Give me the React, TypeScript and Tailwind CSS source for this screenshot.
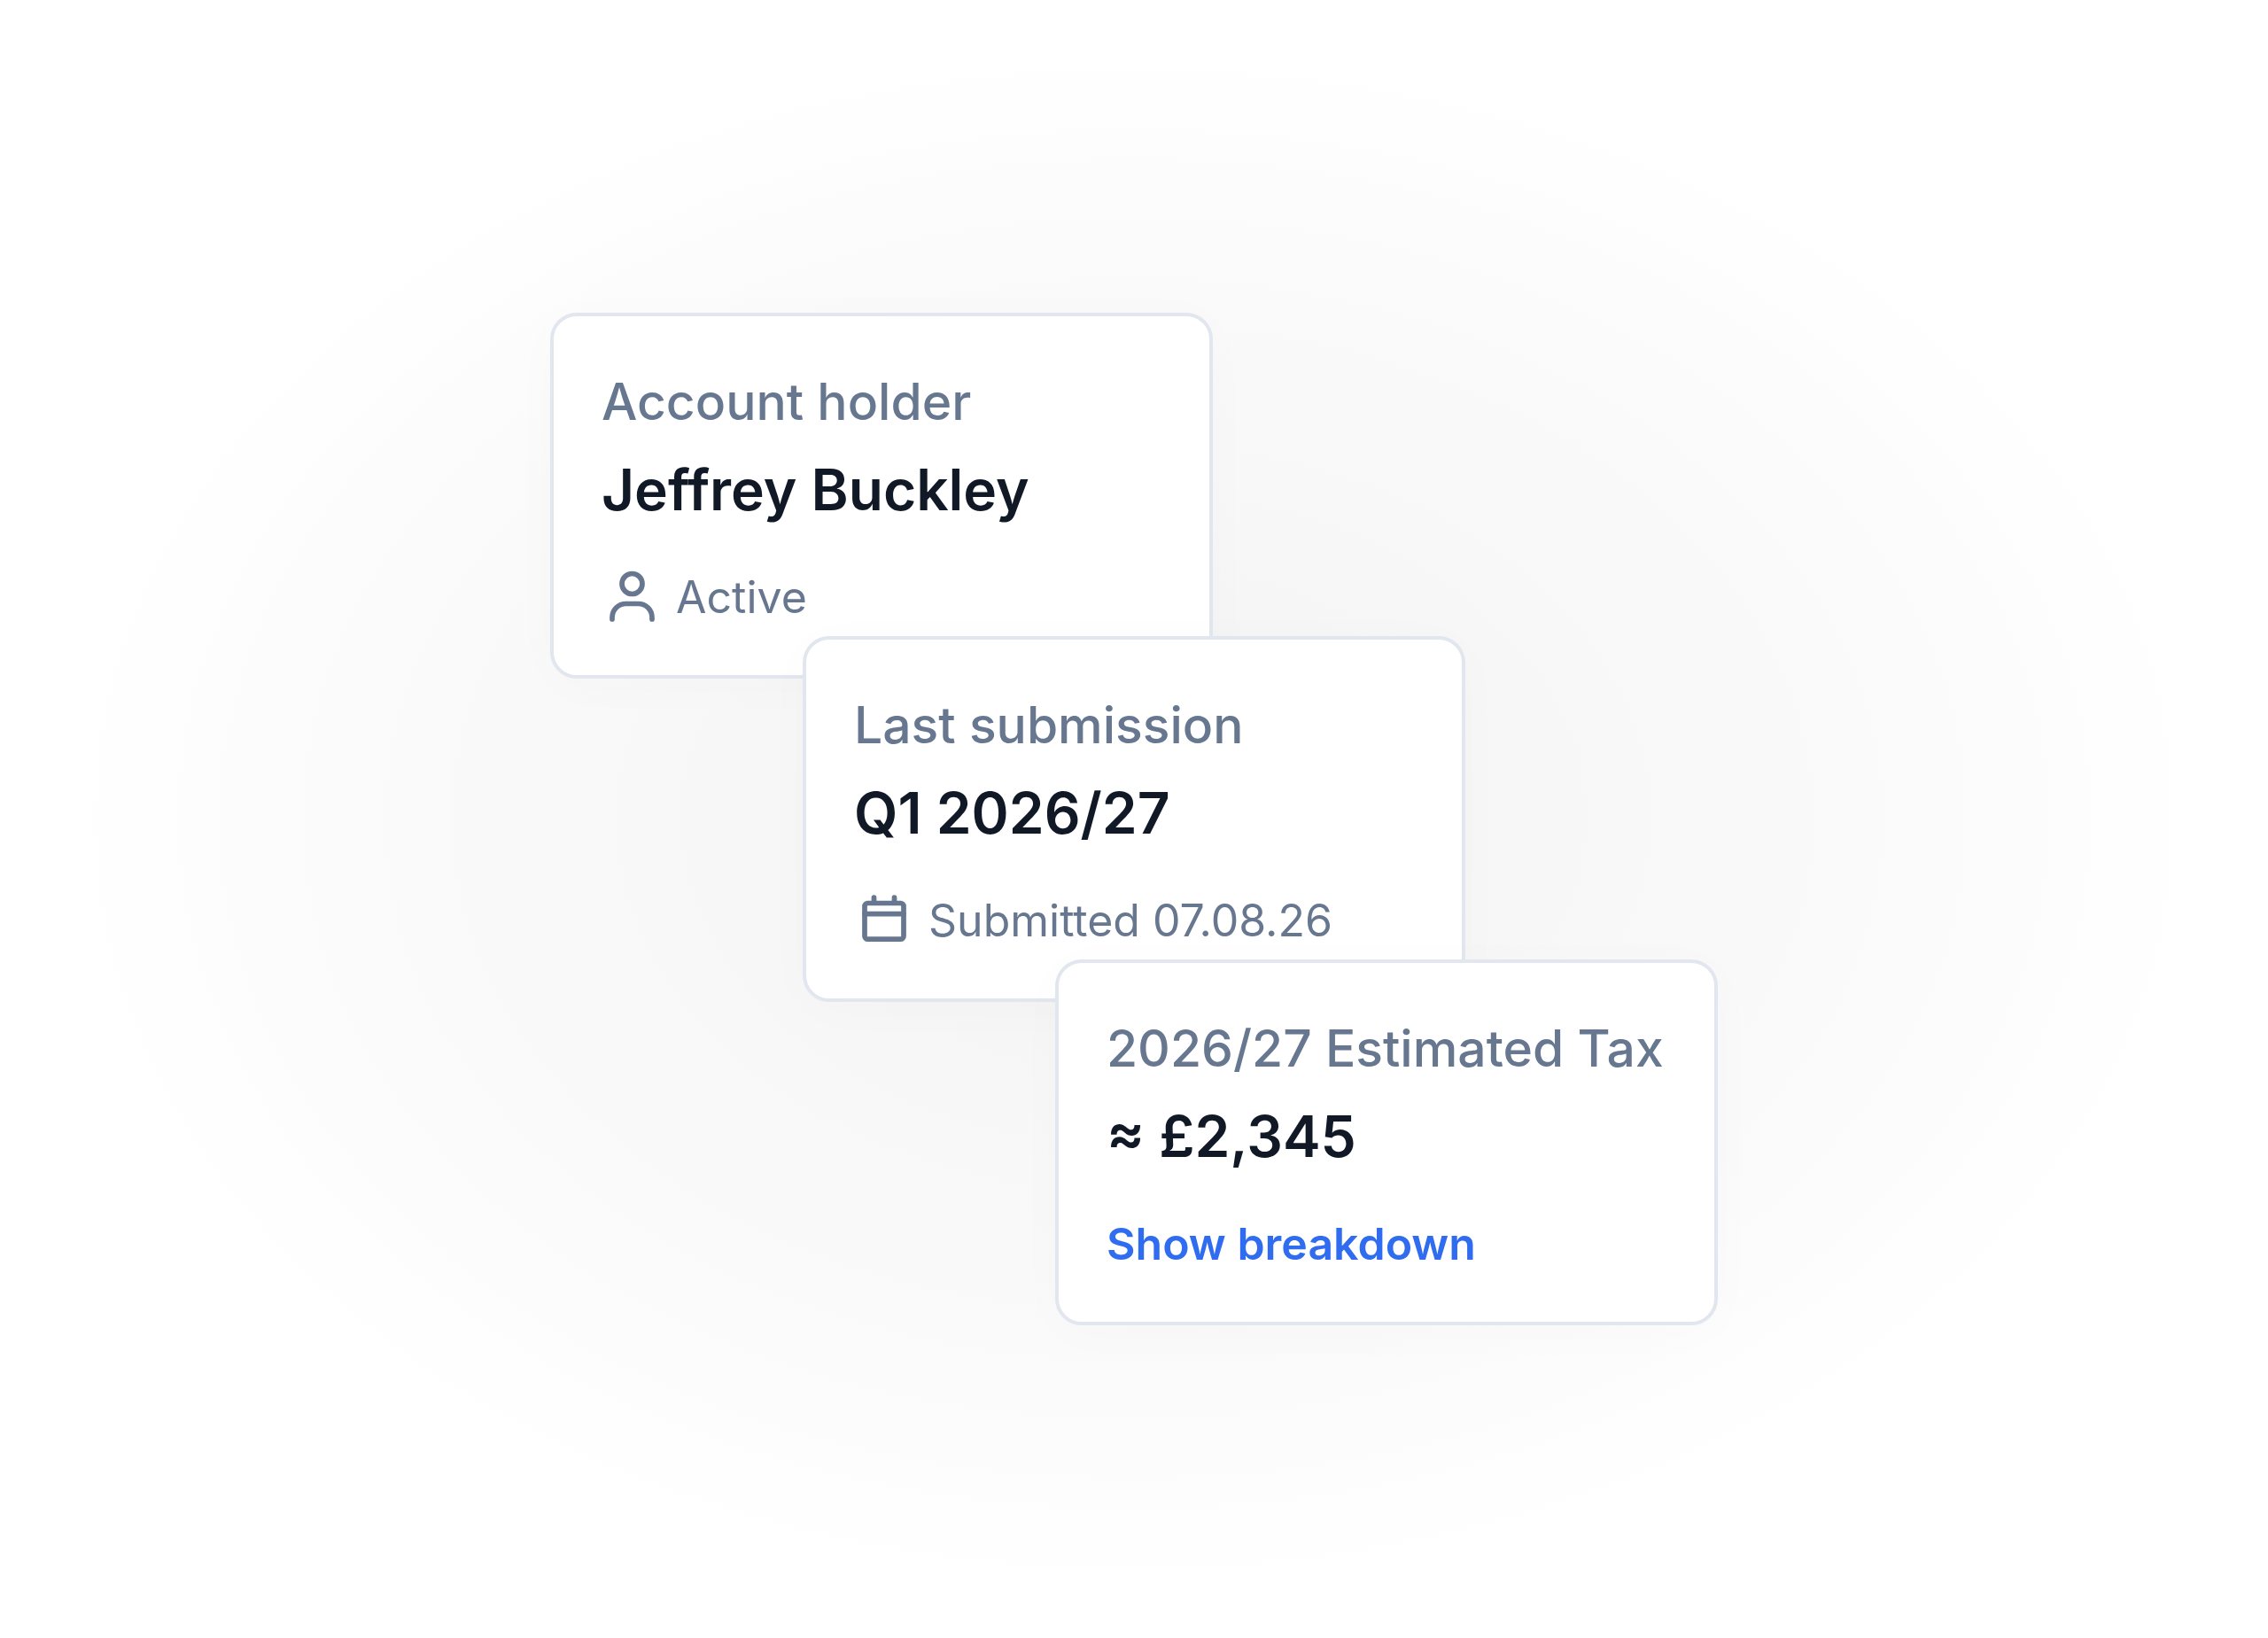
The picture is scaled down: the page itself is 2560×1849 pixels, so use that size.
import type { ReactNode } from 'react';

interface CardProps {
  label: string;
  value: string;
  children: ReactNode;
  className?: string;
}

function Card({ label, value, children, className = '' }: CardProps) {
  return (
    <section
      className={`relative flex h-[413px] w-[748px] flex-col rounded-[30px] border-4 border-[#e1e6ef] bg-white px-[54px] pt-[62px] shadow-[0_8px_60px_rgba(15,23,42,0.02)] ${className}`}
    >
      <h2 className="text-[57px] leading-[70px] font-medium whitespace-nowrap text-[#66778f]">{label}</h2>
      <p className="mt-6 text-[64px] leading-[80px] font-semibold whitespace-nowrap text-[#111926]">{value}</p>
      <div className="mt-[47px] flex h-[68px] items-center gap-4 text-[50px] leading-[64px] text-[#66778f]">{children}</div>
    </section>
  );
}

function UserIcon() {
  return (
    <svg className="size-[68px]" viewBox="0 0 68 68" fill="none" stroke="currentColor" strokeWidth="5.7" strokeLinecap="round">
      <circle cx="34.5" cy="19" r="11.5" />
      <path d="M12 59v-2a15.5 15.5 0 0 1 15.5-15.5h14A15.5 15.5 0 0 1 57 57v2" />
    </svg>
  );
}

function CalendarIcon() {
  return (
    <svg className="size-[68px]" viewBox="0 0 68 68" fill="none" stroke="currentColor" strokeWidth="5.7" strokeLinecap="round">
      <rect x="12" y="14.5" width="44" height="40.7" rx="3.5" />
      <path d="M12 26.6h44M22.5 8v6M45.5 8v6" />
    </svg>
  );
}

export default function App() {
  return (
    <main className="flex min-h-screen items-center justify-center bg-[radial-gradient(closest-side,#f2f2f2_0%,#f8f8f8_42%,#fafafa_65%,#ffffff_94%)] font-['Inter',sans-serif]">
      <div className="flex flex-col">
        <Card label="Account holder" value="Jeffrey Buckley">
          <UserIcon />
          <span>Active</span>
        </Card>
        <Card label="Last submission" value="Q1 2026/27" className="-mt-12 ml-[285px]">
          <CalendarIcon />
          <span>Submitted 07.08.26</span>
        </Card>
        <Card label="2026/27 Estimated Tax" value="≈ £2,345" className="-mt-12 ml-[570px]">
          <button type="button" className="font-semibold text-[#306cf0]">
            Show breakdown
          </button>
        </Card>
      </div>
    </main>
  );
}
